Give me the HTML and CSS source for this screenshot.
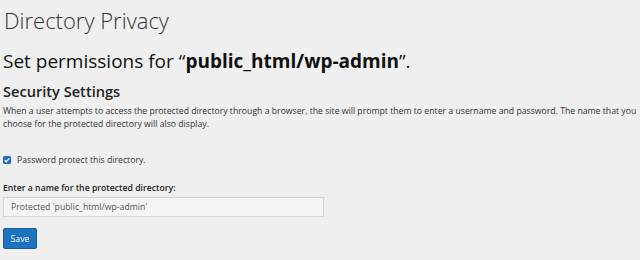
FILE: index.html
```html
<!DOCTYPE html>
<html>
<head>
<meta charset="utf-8">
<link rel="stylesheet" href="styles.css">
</head>
<body>
<div class="page">
  <h1 class="title">Directory Privacy</h1>
  <h2 class="subtitle">Set permissions for “<b>public_html/wp-admin</b>”.</h2>
  <h3 class="section">Security Settings</h3>
  <p class="desc">When a user attempts to access the protected directory through a browser, the site will prompt them to enter a username and password. The name that you choose for the protected directory will also display.</p>
  <label class="check"><span class="box"><svg viewBox="0 0 8 8" width="8" height="8"><path d="M1.8 4.2 L3.3 5.7 L6.2 2.4" fill="none" stroke="#fff" stroke-width="1.3"/></svg></span>Password protect this directory.</label>
  <div class="field-label">Enter a name for the protected directory:</div>
  <div class="input">Protected 'public_html/wp-admin'</div>
  <button class="save">Save</button>
</div>
</body>
</html>
```
FILE: styles.css
```css
html, body { margin: 0; padding: 0; background: #efefef; }
body { font-family: "Open Sans", sans-serif; color: #222; }
.page { padding: 5px 3px; display: flex; flex-direction: column; align-items: flex-start; }
.title { font-weight: 300; font-size: 22px; line-height: 30px; margin: 0 0 0 1px; color: #333; }
.subtitle { font-weight: 400; font-size: 19px; line-height: 26px; margin: 13px 0 0 0; color: #111; }
.subtitle b { font-weight: 700; }
.section { font-weight: 600; font-size: 14.6px; line-height: 20px; margin: 7px 0 0 0; color: #222; }
.desc { font-size: 8.7px; line-height: 13px; margin: 4px 0 0 0; color: #333; }
.check { display: flex; align-items: center; gap: 6px; font-size: 8.7px; margin-top: 23px; color: #333; }
.box { width: 8px; height: 8px; background: #1f6fc6; border-radius: 1.5px; display: flex; }
.field-label { font-weight: 600; font-size: 8.7px; margin-top: 16px; color: #222; }
.input { width: 305px; height: 18px; margin-top: 3px; border: 1px solid #d4d4d4; background: #f4f4f4; font-size: 8.7px; line-height: 18px; padding: 0 7px; color: #555; }
.save { margin-top: 11px; width: 34px; height: 21px; background: #1b72be; color: #fff; border: 1px solid #155fa0; border-radius: 2px; font-family: "Open Sans", sans-serif; font-size: 8.7px; padding: 0; }
```
